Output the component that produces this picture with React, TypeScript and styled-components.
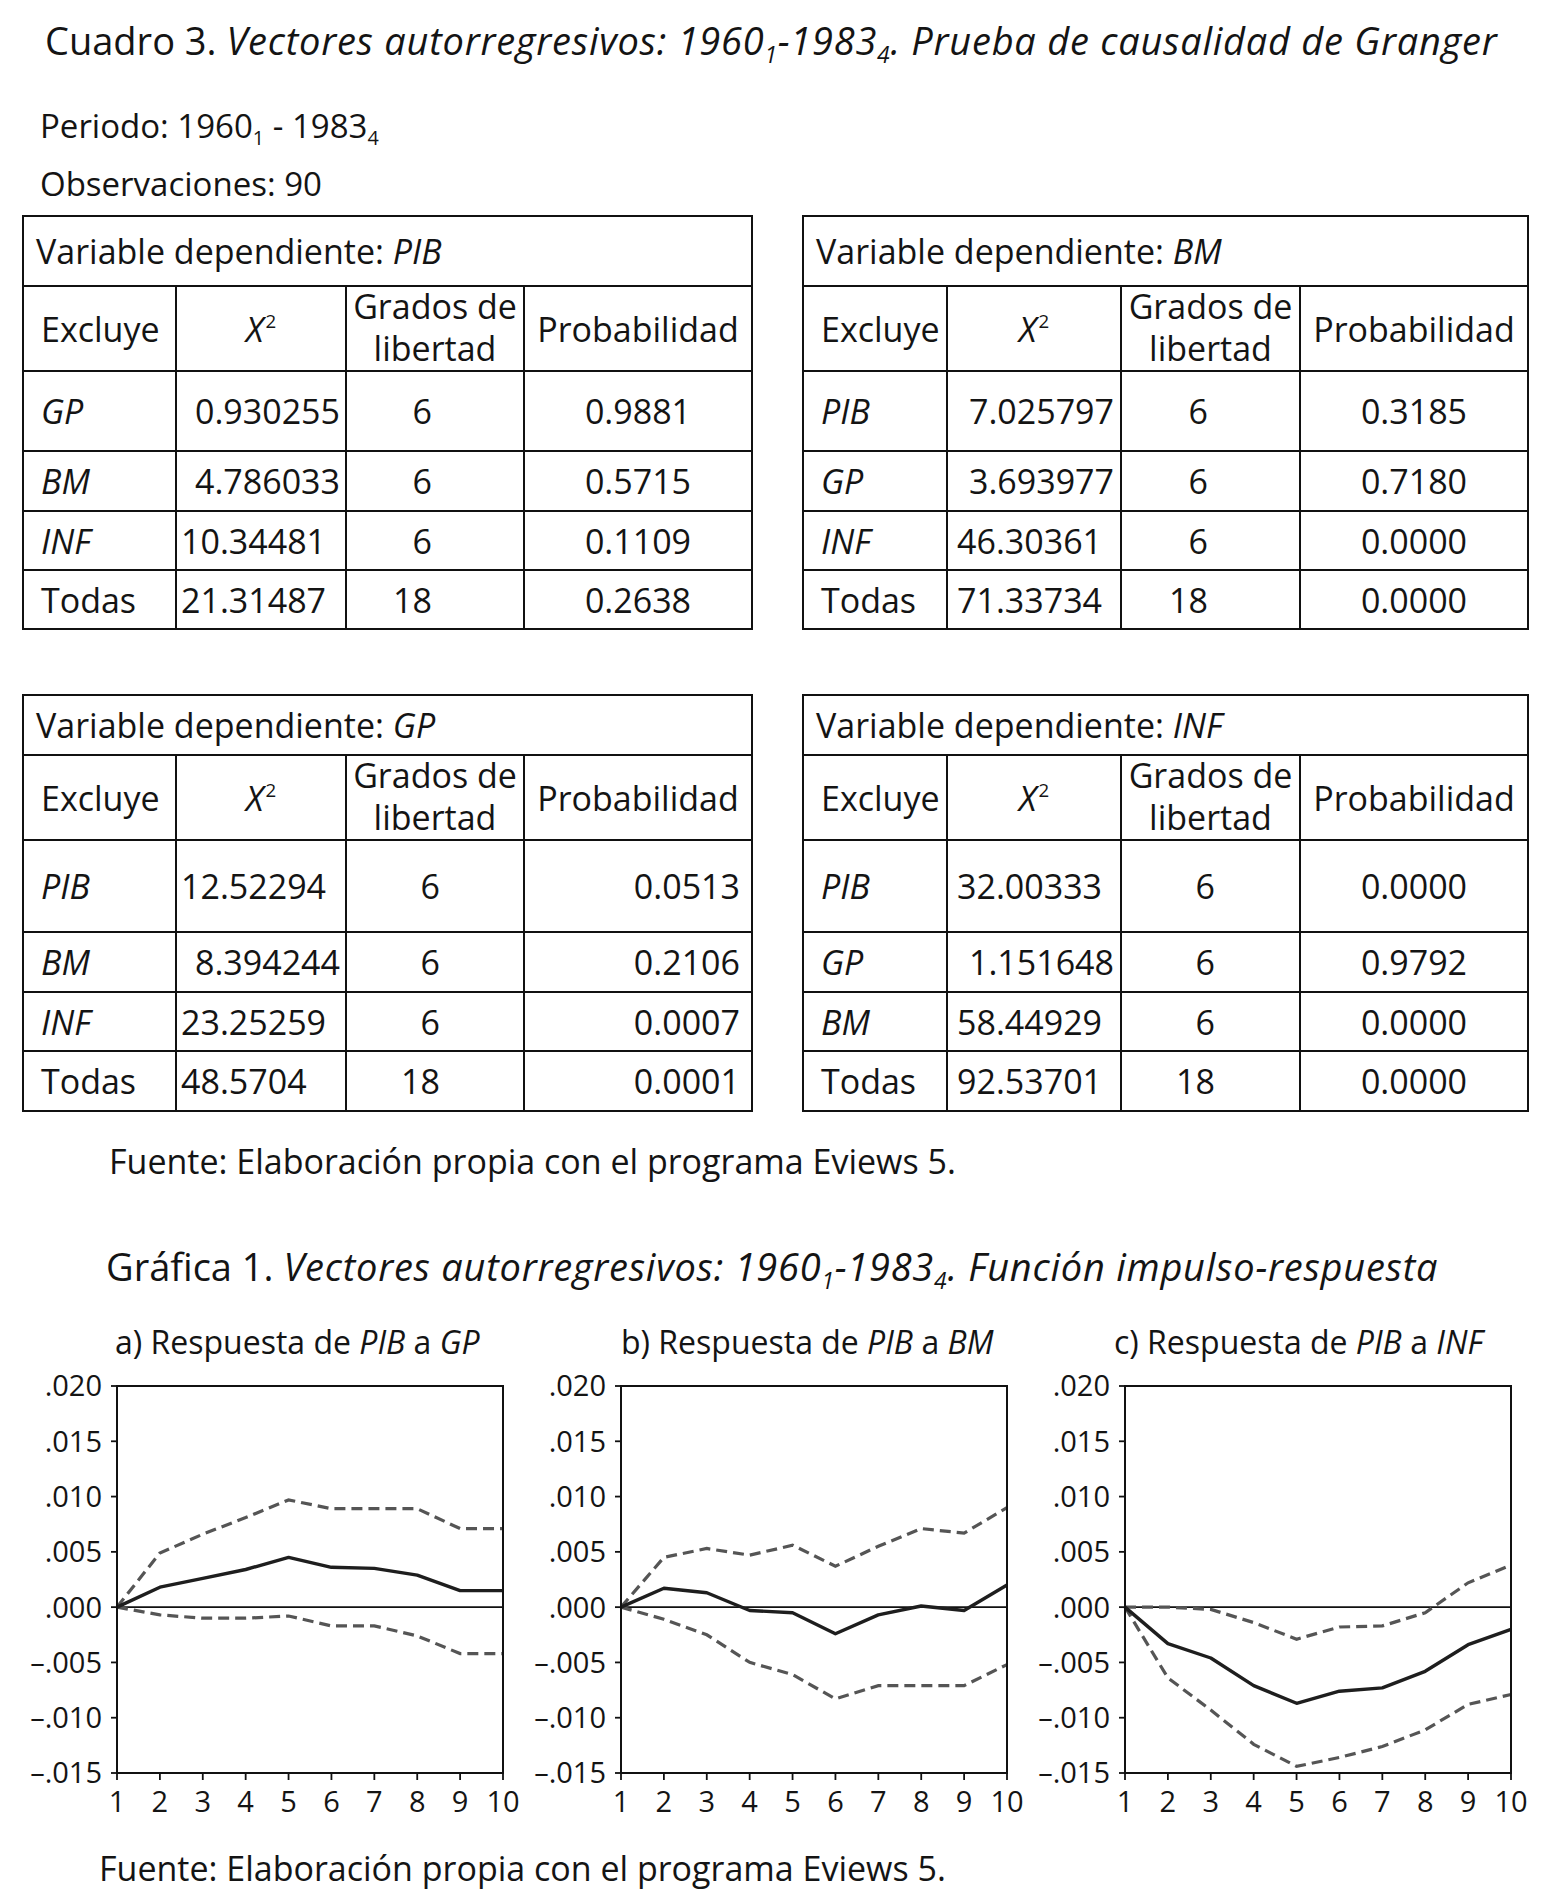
import React from "react";
import styled, { createGlobalStyle } from "styled-components";

const GlobalStyle = createGlobalStyle`
  html, body { margin: 0; padding: 0; background: #fff; }
  body { font-family: "Open Sans", "Noto Sans", sans-serif; color: #141414; }
`;

const Page = styled.div`
  width: 1551px;
  min-height: 1897px;
  background: #fff;
  display: flex;
  flex-direction: column;
`;

const Em = styled.i`
  font-style: italic;
`;

const WideEm = styled.i`
  font-style: italic;
  letter-spacing: 0.75px;
`;

const Sub = styled.sub`
  font-size: 0.6em;
  vertical-align: -0.35em;
  line-height: 0;
`;

const Sup = styled.sup`
  font-size: 0.55em;
  vertical-align: 0.7em;
  line-height: 0;
  font-style: normal;
  margin-left: 2px;
`;

const Title = styled.h1<{ $left: number; $top: number }>`
  margin: ${(p) => p.$top}px 0 0 ${(p) => p.$left}px;
  font-size: 38px;
  font-weight: 400;
  line-height: 44px;
  white-space: nowrap;
`;

const MetaLine = styled.div<{ $top: number }>`
  margin: ${(p) => p.$top}px 0 0 40px;
  font-size: 33px;
  line-height: 44px;
  white-space: nowrap;
`;

const TablesGrid = styled.div`
  display: grid;
  grid-template-columns: 731px 727px;
  column-gap: 49px;
  row-gap: 64px;
  margin: 9px 0 0 22px;
`;

const Table = styled.div<{ $cols: string; $rows: string }>`
  display: grid;
  grid-template-columns: ${(p) => p.$cols};
  grid-template-rows: ${(p) => p.$rows};
  gap: 2px;
  padding: 2px;
  background: #111;
  width: max-content;
  font-size: 34px;
  line-height: 40px;
`;

type Align = "left" | "center" | "right";

const Cell = styled.div<{ $align?: Align; $padL?: number; $padR?: number; $italic?: boolean }>`
  background: #fff;
  display: flex;
  align-items: center;
  justify-content: ${(p) =>
    p.$align === "right" ? "flex-end" : p.$align === "center" ? "center" : "flex-start"};
  padding-left: ${(p) => p.$padL ?? 0}px;
  padding-right: ${(p) => p.$padR ?? 0}px;
  font-style: ${(p) => (p.$italic ? "italic" : "normal")};
  white-space: nowrap;
`;

const TitleCell = styled(Cell)`
  grid-column: 1 / -1;
`;

const HeadCell = styled(Cell)`
  flex-direction: column;
  justify-content: center;
  align-items: ${(p) => (p.$align === "center" ? "center" : "flex-start")};
  text-align: center;
`;

const HeadLine = styled.span`
  display: block;
  line-height: 38px;
  height: 42px;
  overflow: visible;
`;

const Source = styled.p<{ $left: number; $top: number }>`
  margin: ${(p) => p.$top}px 0 0 ${(p) => p.$left}px;
  font-size: 34px;
  line-height: 44px;
  white-space: nowrap;
`;

const ChartsRow = styled.div`
  display: grid;
  grid-template-columns: repeat(3, 504px);
  margin-top: 32px;
`;

const Figure = styled.figure`
  margin: 0;
  display: flex;
  flex-direction: column;
`;

const Caption = styled.figcaption<{ $left: number }>`
  padding-left: ${(p) => p.$left}px;
  font-size: 32px;
  line-height: 44px;
  white-space: nowrap;
`;

const ChartSvg = styled.svg`
  display: block;
  overflow: visible;
  font-family: "Open Sans", "Noto Sans", sans-serif;
`;

type Row = {
  label: string;
  italic: boolean;
  chi: string;
  chiAlign: Align;
  df: string;
  prob: string;
};

type TableSpec = {
  dep: string;
  cols: string;
  rows: string;
  dfPad: number;
  chiPadL: number;
  chiPadR: number;
  probAlign: Align;
  data: Row[];
};

const COLS_L = "151px 168px 176px 226px";
const COLS_R = "142px 172px 177px 226px";
const ROWS_T = "68px 83px 78px 58px 57px 57px";
const ROWS_B = "58px 83px 90px 58px 57px 58px";

const TABLES: TableSpec[] = [
  {
    dep: "PIB",
    cols: COLS_L,
    rows: ROWS_T,
    dfPad: 91,
    chiPadL: 4,
    chiPadR: 5,
    probAlign: "center",
    data: [
      { label: "GP", italic: true, chi: "0.930255", chiAlign: "right", df: "6", prob: "0.9881" },
      { label: "BM", italic: true, chi: "4.786033", chiAlign: "right", df: "6", prob: "0.5715" },
      { label: "INF", italic: true, chi: "10.34481", chiAlign: "left", df: "6", prob: "0.1109" },
      { label: "Todas", italic: false, chi: "21.31487", chiAlign: "left", df: "18", prob: "0.2638" },
    ],
  },
  {
    dep: "BM",
    cols: COLS_R,
    rows: ROWS_T,
    dfPad: 91,
    chiPadL: 9,
    chiPadR: 6,
    probAlign: "center",
    data: [
      { label: "PIB", italic: true, chi: "7.025797", chiAlign: "right", df: "6", prob: "0.3185" },
      { label: "GP", italic: true, chi: "3.693977", chiAlign: "right", df: "6", prob: "0.7180" },
      { label: "INF", italic: true, chi: "46.30361", chiAlign: "left", df: "6", prob: "0.0000" },
      { label: "Todas", italic: false, chi: "71.33734", chiAlign: "left", df: "18", prob: "0.0000" },
    ],
  },
  {
    dep: "GP",
    cols: COLS_L,
    rows: ROWS_B,
    dfPad: 83,
    chiPadL: 4,
    chiPadR: 5,
    probAlign: "right",
    data: [
      { label: "PIB", italic: true, chi: "12.52294", chiAlign: "left", df: "6", prob: "0.0513" },
      { label: "BM", italic: true, chi: "8.394244", chiAlign: "right", df: "6", prob: "0.2106" },
      { label: "INF", italic: true, chi: "23.25259", chiAlign: "left", df: "6", prob: "0.0007" },
      { label: "Todas", italic: false, chi: "48.5704", chiAlign: "left", df: "18", prob: "0.0001" },
    ],
  },
  {
    dep: "INF",
    cols: COLS_R,
    rows: ROWS_B,
    dfPad: 84,
    chiPadL: 9,
    chiPadR: 6,
    probAlign: "center",
    data: [
      { label: "PIB", italic: true, chi: "32.00333", chiAlign: "left", df: "6", prob: "0.0000" },
      { label: "GP", italic: true, chi: "1.151648", chiAlign: "right", df: "6", prob: "0.9792" },
      { label: "BM", italic: true, chi: "58.44929", chiAlign: "left", df: "6", prob: "0.0000" },
      { label: "Todas", italic: false, chi: "92.53701", chiAlign: "left", df: "18", prob: "0.0000" },
    ],
  },
];

function GrangerTable({ spec }: { spec: TableSpec }) {
  return (
    <Table $cols={spec.cols} $rows={spec.rows}>
      <TitleCell $padL={12}>
        Variable dependiente:&nbsp;<Em>{spec.dep}</Em>
      </TitleCell>
      <HeadCell $padL={17}>Excluye</HeadCell>
      <HeadCell $align="center">
        <span>
          <Em>X</Em>
          <Sup>2</Sup>
        </span>
      </HeadCell>
      <HeadCell $align="center">
        <HeadLine>Grados de</HeadLine>
        <HeadLine>libertad</HeadLine>
      </HeadCell>
      <HeadCell $align="center">Probabilidad</HeadCell>
      {spec.data.map((r) => (
        <React.Fragment key={r.label}>
          <Cell $padL={17} $italic={r.italic}>
            {r.label}
          </Cell>
          <Cell $align={r.chiAlign} $padL={spec.chiPadL} $padR={spec.chiPadR}>
            {r.chi}
          </Cell>
          <Cell $align="right" $padR={spec.dfPad}>
            {r.df}
          </Cell>
          <Cell $align={spec.probAlign} $padR={spec.probAlign === "right" ? 11 : 0}>
            {r.prob}
          </Cell>
        </React.Fragment>
      ))}
    </Table>
  );
}

type ChartSpec = {
  key: string;
  caption: React.ReactNode;
  left: number;
  solid: number[];
  upper: number[];
  lower: number[];
};

const CHARTS: ChartSpec[] = [
  {
    key: "a",
    caption: (
      <>
        a) Respuesta de <Em>PIB</Em> a <Em>GP</Em>
      </>
    ),
    left: 115,
    solid: [0, 0.0018, 0.0026, 0.0034, 0.0045, 0.0036, 0.0035, 0.0029, 0.0015, 0.0015],
    upper: [0, 0.0049, 0.0066, 0.0081, 0.0097, 0.0089, 0.0089, 0.0089, 0.0071, 0.0071],
    lower: [0, -0.0007, -0.001, -0.001, -0.0008, -0.0017, -0.0017, -0.0026, -0.0042, -0.0042],
  },
  {
    key: "b",
    caption: (
      <>
        b) Respuesta de <Em>PIB</Em> a <Em>BM</Em>
      </>
    ),
    left: 117,
    solid: [0, 0.0017, 0.0013, -0.0003, -0.0005, -0.0024, -0.0007, 0.0001, -0.0003, 0.002],
    upper: [0, 0.0045, 0.0053, 0.0047, 0.0056, 0.0037, 0.0055, 0.0071, 0.0067, 0.009],
    lower: [0, -0.0011, -0.0025, -0.005, -0.0061, -0.0083, -0.0071, -0.0071, -0.0071, -0.0052],
  },
  {
    key: "c",
    caption: (
      <>
        c) Respuesta de <Em>PIB</Em> a <Em>INF</Em>
      </>
    ),
    left: 106,
    solid: [0, -0.0033, -0.0046, -0.0071, -0.0087, -0.0076, -0.0073, -0.0058, -0.0034, -0.002],
    upper: [0, 0, -0.0002, -0.0014, -0.0029, -0.0018, -0.0017, -0.0005, 0.0022, 0.0038],
    lower: [0, -0.0064, -0.0093, -0.0124, -0.0144, -0.0136, -0.0126, -0.0111, -0.0088, -0.0079],
  },
];

const PX0 = 117;
const PX1 = 503;
const PY0 = 22;
const PY1 = 409;
const YMAX = 0.02;
const YMIN = -0.015;
const xPos = (i: number) => PX0 + (i * (PX1 - PX0)) / 9;
const yPos = (v: number) => PY0 + ((YMAX - v) / (YMAX - YMIN)) * (PY1 - PY0);
const pts = (vals: number[]) => vals.map((v, i) => `${xPos(i).toFixed(1)},${yPos(v).toFixed(1)}`).join(" ");

const Y_TICKS = [
  { v: 0.02, t: ".020" },
  { v: 0.015, t: ".015" },
  { v: 0.01, t: ".010" },
  { v: 0.005, t: ".005" },
  { v: 0, t: ".000" },
  { v: -0.005, t: "–.005" },
  { v: -0.01, t: "–.010" },
  { v: -0.015, t: "–.015" },
];

function ImpulseChart({ spec }: { spec: ChartSpec }) {
  return (
    <Figure>
      <Caption $left={spec.left}>{spec.caption}</Caption>
      <ChartSvg width={504} height={454} viewBox="0 0 504 454">
        <line x1={PX0} x2={PX1} y1={yPos(0)} y2={yPos(0)} stroke="#111" strokeWidth={1.8} />
        <polyline points={pts(spec.upper)} fill="none" stroke="#555" strokeWidth={3.2} strokeDasharray="11 6" />
        <polyline points={pts(spec.lower)} fill="none" stroke="#555" strokeWidth={3.2} strokeDasharray="11 6" />
        <polyline points={pts(spec.solid)} fill="none" stroke="#1e1e1e" strokeWidth={3.4} strokeLinejoin="round" />
        <rect x={PX0} y={PY0} width={PX1 - PX0} height={PY1 - PY0} fill="none" stroke="#111" strokeWidth={2} />
        {Y_TICKS.map((tk) => (
          <g key={tk.t}>
            <line x1={PX0 - 6} x2={PX0} y1={yPos(tk.v)} y2={yPos(tk.v)} stroke="#111" strokeWidth={1.8} />
            <text x={PX0 - 15} y={yPos(tk.v)} dy="0.36em" textAnchor="end" fontSize={29} fill="#141414">
              {tk.t}
            </text>
          </g>
        ))}
        {Array.from({ length: 10 }, (_, i) => (
          <g key={i}>
            <line x1={xPos(i)} x2={xPos(i)} y1={PY1} y2={PY1 + 7} stroke="#111" strokeWidth={1.8} />
            <text x={xPos(i)} y={PY1 + 29} dy="0.36em" textAnchor="middle" fontSize={29} fill="#141414">
              {i + 1}
            </text>
          </g>
        ))}
      </ChartSvg>
    </Figure>
  );
}

export default function App() {
  return (
    <Page>
      <GlobalStyle />
      <Title $left={45} $top={18}>
        Cuadro 3.{" "}
        <WideEm>
          Vectores autorregresivos: 1960<Sub>1</Sub>-1983<Sub>4</Sub>. Prueba de causalidad de Granger
        </WideEm>
      </Title>
      <MetaLine $top={42}>
        Periodo: 1960<Sub>1</Sub> - 1983<Sub>4</Sub>
      </MetaLine>
      <MetaLine $top={14}>Observaciones: 90</MetaLine>
      <TablesGrid>
        {TABLES.map((t) => (
          <GrangerTable key={t.dep} spec={t} />
        ))}
      </TablesGrid>
      <Source $left={109} $top={27}>
        Fuente: Elaboración propia con el programa Eviews 5.
      </Source>
      <Title $left={106} $top={61}>
        Gráfica 1.{" "}
        <WideEm>
          Vectores autorregresivos: 1960<Sub>1</Sub>-1983<Sub>4</Sub>. Función impulso-respuesta
        </WideEm>
      </Title>
      <ChartsRow>
        {CHARTS.map((c) => (
          <ImpulseChart key={c.key} spec={c} />
        ))}
      </ChartsRow>
      <Source $left={99} $top={28}>
        Fuente: Elaboración propia con el programa Eviews 5.
      </Source>
    </Page>
  );
}
